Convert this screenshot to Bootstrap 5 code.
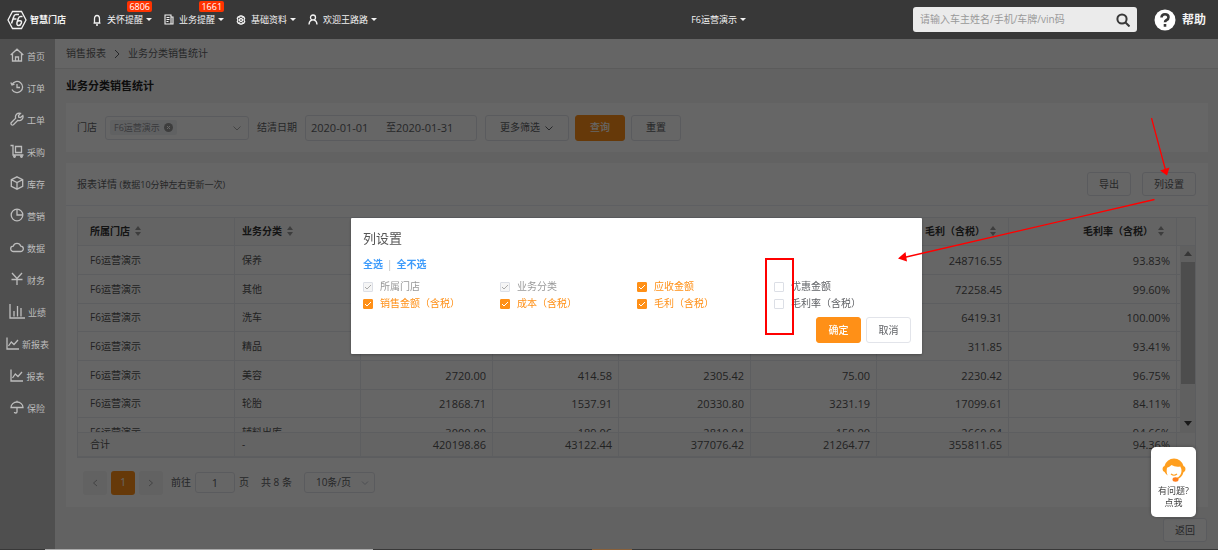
<!DOCTYPE html>
<html lang="zh-CN">
<head>
<meta charset="utf-8">
<meta name="viewport" content="width=device-width, initial-scale=1">
<title>业务分类销售统计</title>
<link href="https://cdn.jsdelivr.net/npm/bootstrap@5.3.0/dist/css/bootstrap.min.css" rel="stylesheet">
<style>
body{font:10px/15px "Open Sans","Noto Sans CJK SC",sans-serif;color:#606266;background:#636363;min-height:100vh}
svg{fill:none;stroke:currentColor;stroke-width:1.3;flex:none}
button,input,select{font:inherit;color:inherit}
/* top bar */
.topbar{height:39px;background:#383838;color:#f2f2f2;font-size:9px}
.topbar a{color:inherit;text-decoration:none}
.brand{margin:0 24px 0 7px}
.brand-name{font-weight:700;width:38px;margin-left:3px}
.menu-item{position:relative;margin-right:12px}
.menu-item svg{margin-right:5px}
.arrow-down{border:3px solid transparent;border-top-color:currentColor;border-bottom:0;margin-left:3px}
.count{position:absolute;top:-11px;right:0;background:#ff3300;color:#fff;border-radius:2px;padding:0 2px;line-height:11px}
.search{width:224px;height:25px;background:#ebebeb;border-radius:3px;font-size:10px;color:#383838;padding:0 7px;margin-left:167px}
.search input{border:0;background:none;outline:0;min-width:0}
.search input::placeholder{color:#999}
.search svg{stroke-width:2}
.help{margin:0 12px 0 17px;font-size:12px;font-weight:700;gap:6px}
/* side bar */
.side{width:55px;background:#4f4f4f;color:#bdbdbd;font-size:9px;flex:none}
.side a{height:32px;color:inherit;text-decoration:none;gap:3px}
.side span{padding-top:3px}
/* page */
.page{background:#f6f6f6;min-width:0}
.crumbs{height:30px;background:#fdfdfd;border-bottom:1px solid #e4e4e4;padding:0 11px;gap:7px}
.crumbs a{color:#666;text-decoration:none}
.page-title{font-size:11px;font-weight:700;color:#222;line-height:34px;margin:0 11px}
.panel{background:#fff;margin:0 10px 11px 11px;padding:0 12px 0 11px}
.filters{height:49px;gap:8px}
.filter-acts{gap:6px}
.box{border:1px solid #e2e4ea;border-radius:3px;background:#fff;height:26px;padding:0 14px;white-space:nowrap;display:inline-flex;align-items:center;justify-content:center}
.pick{width:144px;height:24px;padding:0 6px 0 4px;justify-content:space-between}
.chip{background:#f0f2f5;color:#909399;border-radius:2px;padding:0 4px;font-size:9px;gap:4px}
.dates{width:172px;padding:0 5px;justify-content:flex-start;font-size:11px}
.dates input{width:75px;border:0;background:none;padding:0}
.dates input+span{font-size:10px}
.dates input:last-child{width:70px}
.btn-main{background:#ff9017;border-color:#ff9017;color:#fff;font-weight:500}
.panel-head{height:43px;margin:0 -12px 0 -11px;padding:0 12px 0 11px;border-bottom:1px solid #ebeef5;gap:11px}
.panel-head small{font-size:9px}
.panel-head .box{height:24px;padding:0 11px}
.grid-wrap{position:relative;height:241px;overflow:hidden;margin-top:11px;border:1px solid #e6e8ee}
.grid{width:100%;table-layout:fixed;border-collapse:separate;border-spacing:0;font-size:11px;color:#555}
.grid th,.grid td{height:29px;padding:0 6px;border:solid #e8eaf0;border-width:0 1px 1px 0;text-align:right;white-space:nowrap}
.grid tbody tr:nth-child(3n) td{height:28px}
.grid th{background:#fafafa;color:#333;font-size:10px;font-weight:700;position:sticky;top:0;height:28px;padding-right:12px}
.grid tfoot td{background:#fafafa;position:sticky;bottom:0;height:25px;border-top:1px solid #e8eaf0}
.grid tr>:nth-child(-n+2){text-align:left;font-size:10px;padding-left:7px}
.grid tr>:first-child{padding-left:12px}
.grid tr>:last-child{border-right:0}
.sort{width:6px;height:10px;stroke:none;fill:#999;margin-left:5px;vertical-align:-1px}
.c1{width:157px}.c2{width:126px}.c3{width:132px}.c4{width:168px}.c5{width:19px}
.track{position:absolute;top:28px;right:0;bottom:24px;width:15px;background:#f1f1f1;padding:5px 0 7px}
.track svg{width:8px;height:5px;stroke:none;fill:#888}
.track svg:last-child{fill:#404040}
.thumb{width:14px;height:122px;background:#c1c1c1;margin:6px 0 auto}
.pager{height:49px;padding-left:6px;gap:4px}
.pager .box{height:21px}
.pager .sq{width:24px;height:24px;padding:0;background:#f4f4f5;border:0}
.pager .sq.btn-main{background:#ff9017}
.pager input{width:40px;text-align:center;font-size:11px}
.thin{stroke-width:1;color:#aaa}
.size-select{width:71px;appearance:none;padding:0 11px!important;background:#fff url("data:image/svg+xml,%3Csvg xmlns='http://www.w3.org/2000/svg' viewBox='0 0 8 8'%3E%3Cpath d='M1 2.5l3 3 3-3' fill='none' stroke='%23c0c4cc'/%3E%3C/svg%3E") right 5px center/8px no-repeat!important}
.back{height:24px;width:44px;margin-right:11px}
/* dialog */
.mask{position:absolute;inset:0;background:rgba(0,0,0,.6);padding-top:179px;z-index:2}
.dialog{position:relative;width:571px;background:#fff;padding:10px 11px 11px 12px;border-radius:1px;box-shadow:0 1px 3px rgba(0,0,0,.3)}
.dialog h2{font-size:13px;line-height:20px;font-weight:400;color:#555;margin:0 0 9px}
.picks{gap:4px}
.picks a{color:#3d9bfb;font-weight:700;text-decoration:none}
.picks span{color:#bbb}
.checks{display:grid;grid-template-columns:repeat(4,1fr);row-gap:2px;margin-top:7px}
.checks label{display:flex;align-items:center;gap:7px}
.checks input{appearance:none;width:10px;height:10px;border:1px solid #dcdfe6;border-radius:1px;margin:0;background:#fff}
.checks input:checked{background:#ff9017 url("data:image/svg+xml,%3Csvg xmlns='http://www.w3.org/2000/svg' viewBox='0 0 8 8'%3E%3Cpath d='M1 4l2 2 4-4' fill='none' stroke='white'/%3E%3C/svg%3E") center/8px no-repeat;border-color:#ff9017}
.checks input:disabled{background:#f5f5f5 url("data:image/svg+xml,%3Csvg xmlns='http://www.w3.org/2000/svg' viewBox='0 0 8 8'%3E%3Cpath d='M1 4l2 2 4-4' fill='none' stroke='%23aaa'/%3E%3C/svg%3E") center/8px no-repeat;border-color:#dcdfe6;opacity:1}
.checks :checked+span{color:#ff9017}
.checks :disabled+span{color:#999}
.dialog .acts{gap:5px;margin-top:6px}
.dialog .acts .box{width:45px;padding:0}
.mark-box{position:absolute;left:414px;top:40px;width:29px;height:77px;border:2px solid red}
.pointers{position:absolute;top:71px;right:0;width:328px;height:180px;stroke:red;z-index:3}
.pointers .tip{fill:red;stroke:none}
.service{position:absolute;right:22px;top:408px;width:45px;height:70px;border:0;border-radius:5px;background:#fff;color:#444;font-size:9px;line-height:12px;z-index:3;box-shadow:0 0 4px rgba(0,0,0,.3);padding:2px 0 0}
.service svg{stroke:none;margin-bottom:2px}
.strip{height:1px;background:linear-gradient(90deg,#383838 45px,#aaa 45px 373px,#383838 373px 592px,#8a6038 592px 632px,#383838 632px)}
</style>
</head>
<body class="d-flex flex-column">
<svg class="d-none">
  <symbol id="sorter" viewBox="0 0 6 10"><path d="M3 0l3 4H0zM3 10l3-4H0z"/></symbol>
  <symbol id="chev" viewBox="0 0 10 10"><path d="M1.500 3.500l3.500 3.500 3.500-3.500"/></symbol>
</svg>
<header class="topbar d-flex align-items-center">
  <a href="#" class="brand d-flex align-items-center">
    <svg width="20" height="20" viewBox="0 0 20 20"><path d="M5.500 1.500h9l4.500 8.500-4.500 8.500h-9L1 10z"/><path d="M12 4.500H9Q7.300 4.500 6.800 6.500L4.500 13.500M6 9H9.500" stroke-width="1.500"/><path d="M15.500 6.500h-2Q12 6.500 11.300 8.500L10 12.500q-.5 3 1.500 3t2.800-2.300-1.300-2.500-2.300 1" stroke-width="1.500"/></svg>
    <span class="brand-name">智慧门店</span>
  </a>
  <nav class="d-flex align-items-center">
    <a class="menu-item d-flex align-items-center" href="#"><svg width="10" height="12" viewBox="0 0 10 12"><path d="M2.500 9V5q0-3.500 2.500-3.500T7.500 5v4zM1.500 9.200h7M4 11h2"/></svg>关怀提醒<i class="arrow-down"></i><span class="count">6806</span></a>
    <a class="menu-item d-flex align-items-center" href="#"><svg width="10" height="11" viewBox="0 0 10 11"><path d="M1 1h6v9H1zM7 3h2v7H6M2.500 3.500h3M2.500 5.500h3M2.500 7.500h2" stroke-width="1.100"/></svg>业务提醒<i class="arrow-down"></i><span class="count">1661</span></a>
    <a class="menu-item d-flex align-items-center" href="#"><svg width="10" height="10" viewBox="0 0 10 10"><circle cx="5" cy="5" r="1.500"/><path d="M4 1h2l.4 1 1.200-.2 1 1.600L8 5l.7 1.600-1 1.600-1.200-.2L6 9H4l-.5-1-1.200.2-1-1.600L2 5l-.7-1.600 1-1.600 1.200.2z"/></svg>基础资料<i class="arrow-down"></i></a>
    <a class="menu-item d-flex align-items-center" href="#"><svg width="10" height="11" viewBox="0 0 10 11"><circle cx="5" cy="3.500" r="2.500"/><path d="M1 10.500Q1 7 4 5.800M9 10.500Q9 7 6 5.800"/></svg>欢迎王路路<i class="arrow-down"></i></a>
  </nav>
  <a href="#" class="d-flex align-items-center ms-auto">F6运营演示<i class="arrow-down"></i></a>
  <form class="search d-flex align-items-center">
    <input class="flex-fill p-0" type="text" aria-label="搜索" placeholder="请输入车主姓名/手机/车牌/vin码">
    <button type="button" class="border-0 bg-transparent p-0 d-flex" aria-label="查找"><svg width="14" height="14" viewBox="0 0 14 14"><circle cx="6" cy="6" r="4.600"/><path d="M9.500 9.500l4 4"/></svg></button>
  </form>
  <a href="#" class="help d-flex align-items-center"><svg width="22" height="22" viewBox="0 0 22 22"><circle cx="11" cy="11" r="10.500" fill="#fff" stroke="none"/><path d="M7.500 8.500q0-3.200 3.500-3.200t3.500 2.900q0 1.800-1.900 2.800-1.600.8-1.600 2.300M11 15v2.700" stroke="#383838" stroke-width="2.600"/></svg>帮助</a>
</header>
<div class="d-flex flex-fill">
  <nav class="side d-flex flex-column">
    <a href="#" class="d-flex align-items-center justify-content-center"><svg width="14" height="14" viewBox="0 0 14 14"><path d="M.7 7L7 1.200 13.300 7M2.500 6v7h9V6M5.500 13V9h3v4"/></svg><span>首页</span></a>
    <a href="#" class="d-flex align-items-center justify-content-center"><svg width="14" height="14" viewBox="0 0 14 14"><path d="M2 4.500A5.600 5.600 0 1 1 2 9.500M.8 2.500L2 5l2.500-.8M7 4v3.500h3"/></svg><span>订单</span></a>
    <a href="#" class="d-flex align-items-center justify-content-center"><svg width="14" height="14" viewBox="0 0 14 14"><path d="M10.500 1.300a3.800 3.800 0 0 0-4.800 4.900L1.200 10.700q-.6 1 .2 1.900t2 .2L7.900 8.300a3.800 3.800 0 0 0 4.900-4.800L10.500 5.500 8.700 5.200 8.500 3.500z"/></svg><span>工单</span></a>
    <a href="#" class="d-flex align-items-center justify-content-center"><svg width="14" height="14" viewBox="0 0 14 14"><path d="M.5 1.500H3V11h10.500M5.500 2.500h6V8.500h-6z"/><circle cx="4.500" cy="12.500" r=".8"/><circle cx="11.500" cy="12.500" r=".8"/></svg><span>采购</span></a>
    <a href="#" class="d-flex align-items-center justify-content-center"><svg width="14" height="14" viewBox="0 0 14 14"><path d="M7 .8l5.700 2.900v6.600L7 13.200l-5.700-2.900V3.700zM1.300 3.700L7 6.500l5.700-2.800M7 6.500v6.700"/></svg><span>库存</span></a>
    <a href="#" class="d-flex align-items-center justify-content-center"><svg width="14" height="14" viewBox="0 0 14 14"><circle cx="7" cy="7" r="5.800"/><path d="M7 1.200V7h5.800"/></svg><span>营销</span></a>
    <a href="#" class="d-flex align-items-center justify-content-center"><svg width="14" height="14" viewBox="0 0 14 14"><path d="M3.500 11.500a2.700 2.700 0 0 1-.2-5.400 3.900 3.900 0 0 1 7.400 0 2.700 2.700 0 0 1-.2 5.400z"/></svg><span>数据</span></a>
    <a href="#" class="d-flex align-items-center justify-content-center"><svg width="14" height="14" viewBox="0 0 14 14"><path d="M2 1l5 5.500L12 1M7 6.500V13M1.500 7.500h11"/></svg><span>财务</span></a>
    <a href="#" class="d-flex align-items-center justify-content-center"><svg width="16" height="16" viewBox="0 0 16 16"><path d="M1 1v14h15M5 13.500V8M8.500 13.500V3M12 13.500V5"/></svg><span>业绩</span></a>
    <a href="#" class="d-flex align-items-center justify-content-center"><svg width="13" height="13" viewBox="0 0 13 13"><path d="M1 .5V12h12M2.500 9l2.800-4L8 7.500 12 3"/></svg><span>新报表</span></a>
    <a href="#" class="d-flex align-items-center justify-content-center"><svg width="13" height="13" viewBox="0 0 13 13"><path d="M1 .5V12h12M2.500 9l2.800-4L8 7.500 12 3"/></svg><span>报表</span></a>
    <a href="#" class="d-flex align-items-center justify-content-center"><svg width="14" height="14" viewBox="0 0 14 14"><path d="M1 7.500a6 5.500 0 0 1 12 0zM7 .8V2M7 7.500V12q0 1-1.300 1T4.500 12"/></svg><span>保险</span></a>
  </nav>
  <main class="page position-relative flex-fill">
    <nav class="crumbs d-flex align-items-center"><a href="#">销售报表</a><svg width="8" height="10" viewBox="0 0 8 10"><path d="M2 1l4 4-4 4" stroke-width="1"/></svg><span>业务分类销售统计</span></nav>
    <h1 class="page-title">业务分类销售统计</h1>
    <form class="panel filters d-flex align-items-center">
      <span>门店</span>
      <button type="button" class="box pick" aria-label="门店"><span class="chip d-flex align-items-center">F6运营演示<svg width="9" height="9" viewBox="0 0 9 9"><circle cx="4.500" cy="4.500" r="4.500" fill="#999" stroke="none"/><path d="M3 3l3 3M6 3L3 6" stroke="#fff" stroke-width="1"/></svg></span><svg class="thin" width="10" height="10"><use href="#chev"/></svg></button>
      <label for="from">结清日期</label>
      <div class="box dates"><input id="from" type="text" value="2020-01-01"><span>至</span><input type="text" aria-label="结束日期" value="2020-01-31"></div>
      <div class="filter-acts d-flex">
        <button type="button" class="box">更多筛选<svg class="ms-1" width="10" height="10"><use href="#chev" stroke-width="1"/></svg></button>
        <button type="button" class="box btn-main">查询</button>
        <button type="button" class="box">重置</button>
      </div>
    </form>
    <section class="panel">
      <div class="panel-head d-flex align-items-center">
        <span>报表详情 <small>(数据10分钟左右更新一次)</small></span>
        <button class="box ms-auto">导出</button><button class="box">列设置</button>
      </div>
      <div class="grid-wrap">
        <table class="grid">
          <colgroup><col class="c1"><col class="c2"><col class="c3"><col class="c2"><col class="c3"><col class="c2"><col class="c3"><col class="c4"><col class="c5"></colgroup>
          <thead><tr><th>所属门店<svg class="sort"><use href="#sorter"/></svg></th><th>业务分类<svg class="sort"><use href="#sorter"/></svg></th><th></th><th></th><th></th><th></th><th>毛利（含税）<svg class="sort"><use href="#sorter"/></svg></th><th>毛利率（含税）<svg class="sort"><use href="#sorter"/></svg></th><th></th></tr></thead>
          <tbody>
            <tr><td>F6运营演示</td><td>保养</td><td></td><td></td><td></td><td></td><td>248716.55</td><td>93.83%</td><td></td></tr>
            <tr><td>F6运营演示</td><td>其他</td><td></td><td></td><td></td><td></td><td>72258.45</td><td>99.60%</td><td></td></tr>
            <tr><td>F6运营演示</td><td>洗车</td><td></td><td></td><td></td><td></td><td>6419.31</td><td>100.00%</td><td></td></tr>
            <tr><td>F6运营演示</td><td>精品</td><td></td><td></td><td></td><td></td><td>311.85</td><td>93.41%</td><td></td></tr>
            <tr><td>F6运营演示</td><td>美容</td><td>2720.00</td><td>414.58</td><td>2305.42</td><td>75.00</td><td>2230.42</td><td>96.75%</td><td></td></tr>
            <tr><td>F6运营演示</td><td>轮胎</td><td>21868.71</td><td>1537.91</td><td>20330.80</td><td>3231.19</td><td>17099.61</td><td>84.11%</td><td></td></tr>
            <tr><td>F6运营演示</td><td>辅料出库</td><td>3000.00</td><td>189.06</td><td>2810.94</td><td>150.00</td><td>2660.94</td><td>94.66%</td><td></td></tr>
          </tbody>
          <tfoot><tr><td>合计</td><td>-</td><td>420198.86</td><td>43122.44</td><td>377076.42</td><td>21264.77</td><td>355811.65</td><td>94.36%</td><td></td></tr></tfoot>
        </table>
        <div class="track d-flex flex-column align-items-center"><svg viewBox="0 0 8 5"><path d="M4 0l4 5H0z"/></svg><div class="thumb"></div><svg viewBox="0 0 8 5"><path d="M4 5l4-5H0z"/></svg></div>
      </div>
      <div class="pager d-flex align-items-center">
        <button class="box sq" aria-label="上一页"><svg class="thin" width="8" height="10" viewBox="0 0 8 10"><path d="M6 2L2.500 5 6 8"/></svg></button>
        <button class="box sq btn-main">1</button>
        <button class="box sq" aria-label="下一页"><svg class="thin" width="8" height="10" viewBox="0 0 8 10"><path d="M2 2l3.500 3L2 8"/></svg></button>
        <label class="ms-1" for="goto">前往</label><input id="goto" class="box p-0" type="text" value="1"><span>页</span>
        <span class="ms-2">共 8 条</span>
        <select class="box size-select ms-2" aria-label="每页条数"><option>10条/页</option></select>
      </div>
    </section>
    <div class="d-flex justify-content-end"><button class="box back p-0">返回</button></div>

    <div class="mask d-flex justify-content-center align-items-start">
      <div class="dialog" role="dialog" aria-label="列设置">
        <h2>列设置</h2>
        <div class="picks d-flex"><a href="#">全选</a><span>|</span><a href="#">全不选</a></div>
        <div class="checks">
          <label><input type="checkbox" checked disabled><span>所属门店</span></label>
          <label><input type="checkbox" checked disabled><span>业务分类</span></label>
          <label><input type="checkbox" checked><span>应收金额</span></label>
          <label><input type="checkbox"><span>优惠金额</span></label>
          <label><input type="checkbox" checked><span>销售金额（含税）</span></label>
          <label><input type="checkbox" checked><span>成本（含税）</span></label>
          <label><input type="checkbox" checked><span>毛利（含税）</span></label>
          <label><input type="checkbox"><span>毛利率（含税）</span></label>
        </div>
        <div class="acts d-flex justify-content-end"><button class="box btn-main">确定</button><button class="box">取消</button></div>
        <div class="mark-box"></div>
      </div>
    </div>
    <svg class="pointers pe-none" viewBox="890 110 328 180"><path d="M1151.500 118L1165.500 170M1154.500 199.500L904 257.500"/><path class="tip" d="M1160 170.500l9.500-3-2.500 8zM898 258.500l7.500-6.500 1.500 9.500z"/></svg>
    <button class="service"><svg width="26" height="26" viewBox="0 0 26 26"><path d="M3.500 9Q6 1.500 13 1.500T22.500 9q2 .3 2 3t-2 3.200Q21 20.500 16 22.500l-.7-1.200q5-2 5.200-7.300 0-2.500-1.200-4.500-5 1-8.800-1.500Q8.500 10 6 10.800q-1 5 .8 7.700-2-1-3.200-3.400Q1.500 14.500 1.500 12t2-3z" fill="#ff9f1f"/><ellipse cx="14.500" cy="22.500" rx="3" ry="2.200" fill="#ff7f1f"/><path d="M10 17q3 2.500 6 0" stroke="#ff9f1f" stroke-width="1.200"/></svg><br>有问题?<br>点我</button>
  </main>
</div>
<div class="strip"></div>
<script src="https://cdn.jsdelivr.net/npm/bootstrap@5.3.0/dist/js/bootstrap.bundle.min.js"></script>
</body>
</html>
